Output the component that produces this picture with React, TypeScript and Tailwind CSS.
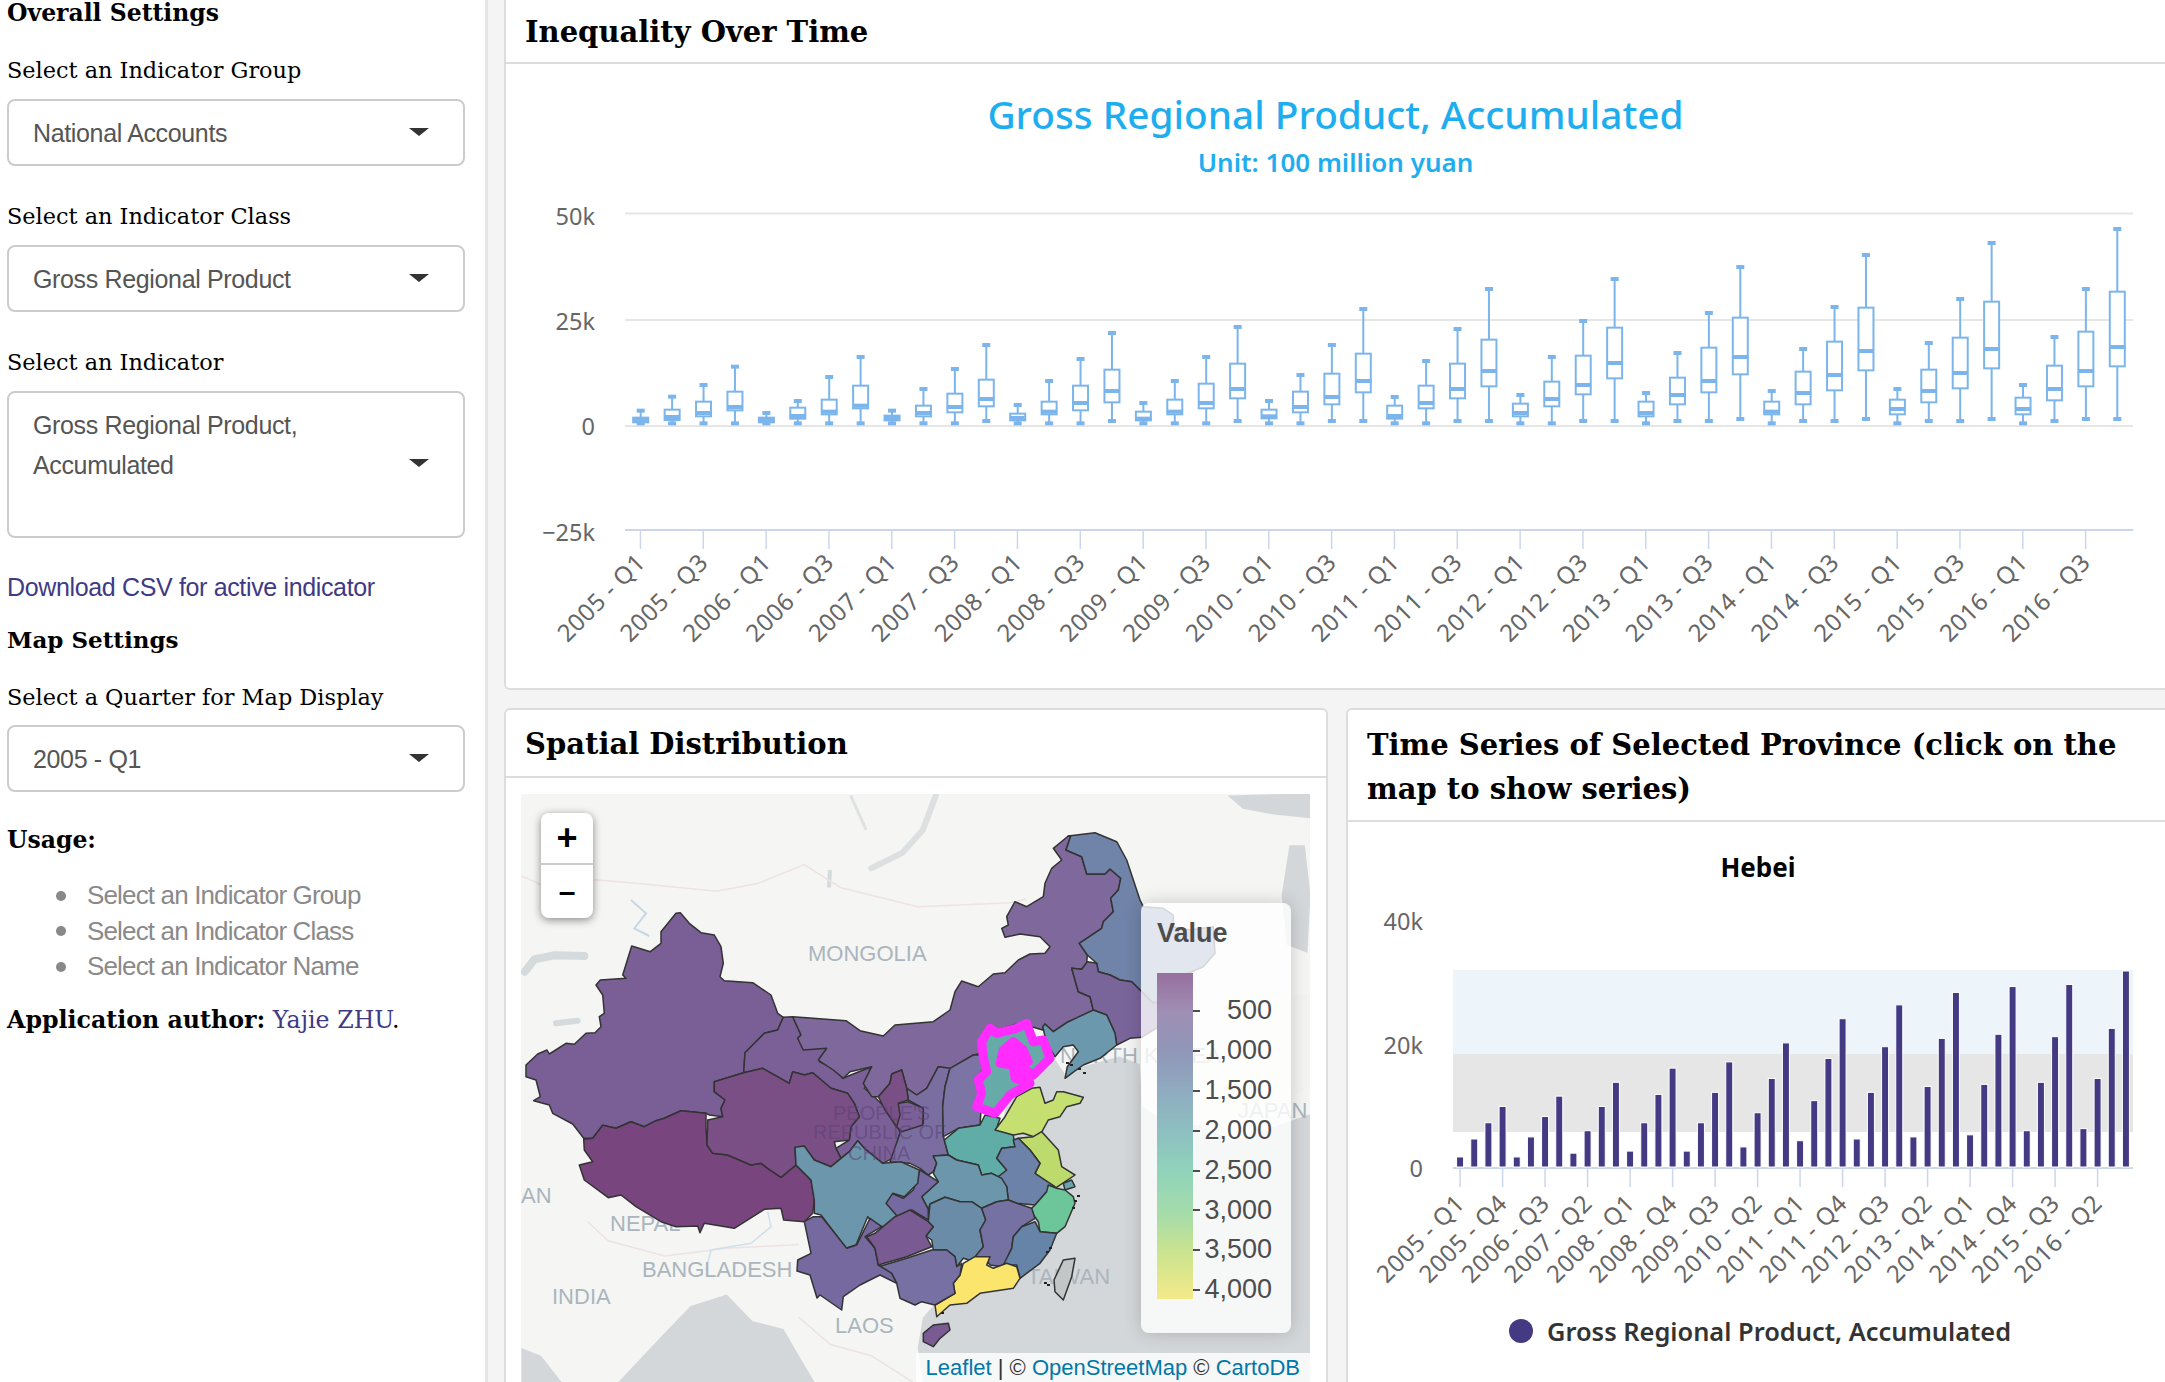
import React from "react";

const serif = "font-['DejaVu_Serif',serif]";
const sans = "font-['Liberation_Sans',sans-serif]";
const chartFont = "'Noto Sans', sans-serif";

// [high, boxTop, median, boxBottom, low], measured on the crop (y = 180 + v / 3)
const boxData = [
  [692, 713, 720, 727, 730], [650, 689, 711, 720, 730], [615, 665, 699, 709, 730], [560, 635, 681, 691, 730],
  [699, 713, 720, 727, 730], [663, 683, 708, 716, 730], [591, 659, 695, 703, 730], [531, 617, 677, 685, 730],
  [692, 707, 714, 721, 730], [627, 677, 699, 709, 730], [567, 641, 681, 697, 730], [495, 599, 657, 679, 723],
  [675, 701, 714, 721, 730], [603, 665, 695, 703, 730], [537, 617, 669, 691, 730], [459, 569, 633, 667, 723],
  [669, 695, 716, 721, 730], [603, 659, 695, 703, 730], [531, 611, 669, 685, 730], [441, 551, 627, 655, 723],
  [663, 689, 709, 715, 730], [585, 635, 681, 697, 730], [495, 581, 651, 673, 723], [387, 521, 603, 637, 723],
  [651, 677, 708, 716, 730], [543, 617, 669, 685, 730], [447, 551, 627, 655, 723], [327, 479, 573, 619, 723],
  [645, 671, 699, 709, 730], [531, 605, 657, 679, 730], [423, 527, 615, 643, 723], [297, 443, 549, 595, 723],
  [639, 665, 699, 709, 730], [519, 593, 645, 673, 723], [399, 503, 603, 637, 723], [261, 413, 531, 583, 717],
  [633, 665, 695, 703, 730], [507, 575, 639, 673, 723], [381, 485, 585, 631, 723], [225, 383, 513, 571, 717],
  [627, 659, 687, 703, 730], [489, 569, 633, 667, 723], [357, 473, 579, 625, 723], [189, 365, 507, 565, 717],
  [615, 653, 687, 703, 730], [471, 557, 627, 661, 723], [327, 455, 573, 619, 717], [147, 335, 501, 559, 717],
];

const barData = [
  917, 865, 818, 771, 917, 859, 800, 741, 906, 841, 771, 701, 900, 818, 736, 660, 900, 818, 730, 642, 888, 789, 690, 587,
  870, 754, 632, 517, 865, 730, 598, 477, 859, 713, 574, 441, 853, 707, 562, 424, 841, 701, 569, 418, 835, 690, 545, 379,
];

const topLabels: string[] = [];
for (let y = 2005; y <= 2016; y++) {
  topLabels.push(`${y} - Q1`, `${y} - Q3`);
}

const sideLabels = [
  "2005 - Q1", "2005 - Q4", "2006 - Q3", "2007 - Q2", "2008 - Q1", "2008 - Q4", "2009 - Q3", "2010 - Q2",
  "2011 - Q1", "2011 - Q4", "2012 - Q3", "2013 - Q2", "2014 - Q1", "2014 - Q4", "2015 - Q3", "2016 - Q2",
];

// map outlines were traced on crops, each crop has its own origin and scale
const crops: Record<string, [number, number, number, number]> = {
  a: [521, 900, 1 / 3, 1 / 3],
  b: [800, 1000, 1 / 3, 1 / 3],
  c: [950, 800, 1 / 3, 1 / 3],
  d: [510, 780, 1 / 1.9375, 1 / 2.605],
};

const pts = (segs: [string, string][]) =>
  segs
    .map(([k, s]) => {
      const [ox, oy, sx, sy] = crops[k];
      return s
        .trim()
        .split(/\s+/)
        .map((p) => {
          const [x, y] = p.split(",").map(Number);
          return `${(ox + x * sx).toFixed(1)},${(oy + y * sy).toFixed(1)}`;
        })
        .join(" ");
    })
    .join(" ");

const provinces: { c: string; d: [string, string][] }[] = [
  { c: "#7a5e96", d: [["a", "478,38 505,70 540,98 580,105 600,140 607,190 597,230 610,242 695,248 750,285 770,340 787,352 770,390 730,400 695,435 672,458 668,518 580,545 580,575 612,600 600,625 605,650 565,645 555,640 480,632 430,655 405,662 370,680 330,665 285,685 245,676 215,715 188,715 155,672 95,640 85,615 38,602 58,590 45,540 15,530 15,495 50,462 78,450 85,462 135,430 160,433 195,400 222,398 240,380 235,350 250,340 245,285 225,255 238,240 315,235 305,225 332,138 388,155 420,130 420,95 465,40"]] },
  { c: "#78457f", d: [["a", "555,640 480,632 430,655 405,662 370,680 330,665 285,685 245,676 215,715 188,718 190,750 215,785 175,795 190,840 262,893 300,885 345,920 420,965 465,980 530,978 537,998 550,970 640,985 730,928 780,925 788,960 850,965 875,940 880,900 870,840 825,795 780,832 740,805 720,790 690,795 620,765 575,760 558,735 555,680"]] },
  { c: "#7b5f97", d: [["a", "787,352 815,350 840,405 830,415 855,448 905,435 918,450 895,485 945,510 965,535 1040,505 1055,510 1050,535 1030,565 1060,590 1090,620 1110,650 1125,680 1140,690 1130,720 1125,770 1085,790 1030,745 1010,722 985,755 960,775 945,745 985,720 990,680 1015,650 1000,610 980,580 930,565 875,518 850,525 815,515 805,550 725,505 668,518 672,458 695,435 730,400 770,390"]] },
  { c: "#7a4f85", d: [["a", "580,545 668,518 725,505 805,550 815,515 850,525 875,518 930,565 980,580 1000,610 1015,650 990,680 985,720 940,725 945,745 960,775 930,800 880,780 850,740 822,745 825,795 780,832 740,805 720,790 690,795 620,765 575,760 558,735 560,660 605,650 600,625 612,600 580,575"]] },
  { c: "#7e689c", d: [["a", "815,350"], ["b", "138,62 180,92 250,108 285,75 400,65 450,30"], ["c", "15,575 35,543 85,560 130,522 165,518 205,480 240,462 285,460 300,440 270,410 210,402 165,412 155,385 175,375 170,350 195,305 230,320 280,290 285,250 305,205 335,180 310,145 355,108 362,108 348,150 395,170 410,222 465,222 480,207 512,235 505,270 482,295 490,335 460,365 455,385 388,430 412,465 410,490 395,508 365,505 385,575 420,590 430,630 400,650 355,665 310,695 285,672 278,690"], ["b", "660,70 590,90 570,85 545,125 545,160 520,165 455,208 415,200 380,265 350,285 320,265 305,210 275,222 270,250 235,290 215,290 190,250 215,200 150,215 130,235 100,210 55,180 80,145 10,150 0,130"], ["a", "830,415 840,405"]] },
  { c: "#7083a8", d: [["c", "355,108 435,98 500,125 530,180 555,255 570,300 580,320 640,325 670,345 670,380 720,390 790,380 795,460 760,500 690,530 660,590 610,610 575,575 545,545 510,540 480,525 445,515 440,490 412,465 388,430 455,385 460,365 490,335 482,295 505,270 512,235 480,207 465,222 410,222 395,170 348,150 362,108"]] },
  { c: "#7a659b", d: [["c", "365,505 395,508 412,485 440,490 445,515 480,525 510,540 545,545 575,575 610,610 660,590 690,620 660,660 610,690 575,712 540,715 500,735 495,700 470,645 430,630 420,590 385,575"]] },
  { c: "#6c98ad", d: [["c", "278,680 285,672 310,695 355,665 430,630 470,645 495,700 500,735 450,775 400,795 372,815 345,835 352,800 385,755 370,735 340,740 315,770 290,730"]] },
  { c: "#7a6ea1", d: [["b", "415,200 450,205 435,260 428,320 430,408 445,465 400,468 410,490 400,515 385,525 360,505 330,490 270,485 300,400 295,380 300,345 325,380 370,370 370,325 325,300 320,265 350,285 380,265"]] },
  { c: "#7b5f97", d: [["b", "295,310 325,305 370,325 368,375 305,395 290,380"]] },
  { c: "#7a4f85", d: [["b", "305,210 275,222 270,250 235,290 255,330 290,380 300,345 295,310 325,300 320,265"]] },
  { c: "#7b74a4", d: [["b", "450,205 520,165 540,165 555,200 525,240 545,300 540,375 475,385 430,410 428,320 435,260"]] },
  { c: "#60ada8", d: [["b", "433,420 475,385 540,375 555,345 600,355 590,385 640,405 645,440 605,445 590,475 620,510 605,535 575,520 545,525 535,495 470,480 445,465"]] },
  { c: "#c5e070", d: [["b", "585,390 615,350 650,290 695,265 720,262 735,310 760,300 770,275 790,275 850,292 840,310 800,320 780,350 745,360 715,415 670,400 640,405"]] },
  { c: "#bcdb6c", d: [["b", "655,415 700,410 725,395 775,450 785,500 825,525 765,565 705,520 720,490 690,450"]] },
  { c: "#6d82a8", d: [["b", "640,420 655,415 690,450 720,490 705,520 765,560 740,575 705,615 650,610 625,600 620,560 595,530 620,510 590,475 605,445 645,440"]] },
  { c: "#6da3ae", d: [["b", "790,550 815,540 825,560 795,570"]] },
  { c: "#6cc69a", d: [["b", "745,555 770,565 795,570 820,590 825,610 795,680 770,700 720,695 715,665 690,630 705,615 740,575"]] },
  { c: "#6c96ac", d: [["b", "400,520 410,490 400,468 445,465 470,480 535,495 545,525 575,520 605,535 620,560 625,600 590,605 545,625 515,605 480,605 435,592 390,612 385,628 365,590 415,545"]] },
  { c: "#7469a0", d: [["b", "360,510 415,545 365,590 385,628 385,660 335,630 300,650 285,655 260,625 255,610 275,580 310,595 340,570"]] },
  { c: "#6c96ac", d: [["a", "822,742 850,738 880,780 930,800 985,755 1010,722 1030,745 1085,790 1140,785 1195,810 1190,850 1150,890 1115,880 1095,910 1130,950 1110,985 1060,975 1040,950 1005,1035 975,1045 900,945 880,940 880,900 870,840 825,795"]] },
  { c: "#6a8ca9", d: [["b", "390,612 435,592 480,605 515,605 545,625 557,660 540,690 550,740 525,785 490,775 470,800 465,770 440,750 400,750 395,720 378,708 400,680 385,665"]] },
  { c: "#7572a3", d: [["b", "545,625 590,605 625,600 650,610 695,625 705,655 665,680 640,710 635,745 610,800 570,795 555,775 525,770 550,740 540,690 557,660"]] },
  { c: "#6584a8", d: [["b", "705,665 720,695 770,700 750,750 720,790 660,835 650,795 610,795 635,745 640,710 665,680"]] },
  { c: "#fbe56c", d: [["b", "490,790 525,770 570,770 560,795 580,805 620,790 650,800 660,835 640,865 570,875 540,880 500,910 450,915 410,950 405,915 465,880 460,850 480,825"]] },
  { c: "#7670a3", d: [["b", "235,800 320,775 395,750 440,750 465,770 470,800 485,790 480,825 460,850 465,880 405,915 365,905 345,915 300,895 290,850 275,820"]] },
  { c: "#7669a0", d: [["b", "13,665 40,650 65,650 140,745 170,735 210,655 245,680 195,710 225,745 235,795 275,820 290,850 240,825 180,855 130,890 125,930 60,885 51,894 30,825 -9,813 -7,780 33,760"]] },
  { c: "#7a5a92", d: [["b", "200,710 225,700 285,650 330,630 385,665 400,680 378,708 395,740 320,770 235,795 225,745"]] },
  { c: "#7a5a92", d: [["b", "370,1000 400,975 445,970 450,990 420,1015 400,1040 370,1025"]] },
  { c: "#c3c6c6", d: [["b", "790,780 825,775 815,830 790,900 765,875 762,840"]] },
];

const mapLabels: [string, number, number, number][] = [
  ["MONGOLIA", 808, 961, 22],
  ["NEPAL", 610, 1231, 22],
  ["BANGLADESH", 642, 1277, 22],
  ["INDIA", 552, 1304, 22],
  ["LAOS", 835, 1333, 22],
  ["AN", 521, 1203, 22],
  ["TAIWAN", 1027, 1284, 22],
  ["NORTH KOREA", 1060, 1063, 22],
  ["JAPAN", 1238, 1118, 22],
];

const Caret = ({ mt }: { mt: string }) => (
  <div className={`h-0 w-0 border-x-[10px] border-t-[8px] border-x-transparent border-t-[#333] ${mt}`} />
);

const Select = ({ lines, tall, className }: { lines: string[]; tall?: boolean; className?: string }) => (
  <div
    className={`flex justify-between rounded-lg border-2 border-[#ccc] pl-[24px] pr-[34px] pt-[12px] text-[#555] ${sans} text-[25px] leading-[40px] tracking-[-0.35px] ${
      tall ? "h-[147px]" : "h-[67px]"
    } ${className ?? ""}`}
  >
    <div>
      {lines.map((l) => (
        <div key={l}>{l}</div>
      ))}
    </div>
    <Caret mt={tall ? "mt-[54px]" : "mt-[15px]"} />
  </div>
);

const Label = ({ children, className }: { children: React.ReactNode; className?: string }) => (
  <div className={`h-[32px] text-[22.4px] leading-[32px] text-black ${className ?? ""}`}>{children}</div>
);

const Bullet = ({ children }: { children: React.ReactNode }) => (
  <li className="flex items-center">
    <span className="mr-[21px] h-[10px] w-[10px] rounded-full bg-[#888]" />
    {children}
  </li>
);

const Sidebar = () => (
  <aside className={`h-full w-[488px] shrink-0 border-r-[3px] border-[#e6e6e6] bg-white pl-[7px] pr-[20px] ${serif}`}>
    <div className="h-[27px] text-[23.5px] font-bold leading-[27px] text-black">Overall Settings</div>
    <Label className="mt-[27px]">Select an Indicator Group</Label>
    <Select lines={["National Accounts"]} className="mt-[13px]" />
    <Label className="mt-[34px]">Select an Indicator Class</Label>
    <Select lines={["Gross Regional Product"]} className="mt-[13px]" />
    <Label className="mt-[34px]">Select an Indicator</Label>
    <Select lines={["Gross Regional Product,", "Accumulated"]} tall className="mt-[13px]" />
    <div className={`mt-[33px] h-[32px] text-[25px] leading-[32px] tracking-[-0.35px] text-[#3f3a85] ${sans}`}>
      Download CSV for active indicator
    </div>
    <div className="mt-[21px] h-[32px] text-[23px] font-bold leading-[32px] text-black">Map Settings</div>
    <Label className="mt-[25px]">Select a Quarter for Map Display</Label>
    <Select lines={["2005 - Q1"]} className="mt-[12px]" />
    <div className="mt-[32px] h-[32px] text-[23.5px] font-bold leading-[32px] text-black">Usage:</div>
    <ul className={`mt-[22px] pl-[49px] text-[26px] leading-[35.5px] tracking-[-0.85px] text-[#8a8a8a] ${sans}`}>
      <Bullet>Select an Indicator Group</Bullet>
      <Bullet>Select an Indicator Class</Bullet>
      <Bullet>Select an Indicator Name</Bullet>
    </ul>
    <div className="mt-[19px] h-[32px] text-[23.7px] leading-[32px] text-black">
      <span className="font-bold">Application author:</span> <span className="text-[#3f3a85]">Yajie ZHU</span>.
    </div>
  </aside>
);

const Header = ({ children, className }: { children: React.ReactNode; className?: string }) => (
  <div className={`border-b-2 border-[#ddd] px-[19px] text-[29px] font-bold leading-[44px] text-black ${serif} ${className ?? ""}`}>
    {children}
  </div>
);

const BoxPlot = () => {
  const step = (2133 - 625) / 48;
  const yOf = (v: number) => 180 + v / 3;
  return (
    <svg viewBox="506 190 1659 498" className="block h-[498px] w-[1659px]" style={{ fontFamily: chartFont }}>
      {[213.5, 320, 426].map((y) => (
        <rect key={y} x={625} y={y - 1} width={1508} height={2} fill="#e6e6e6" />
      ))}
      <rect x={625} y={529} width={1508} height={2} fill="#ccd6eb" />
      {[["50k", 225], ["25k", 330], ["0", 435], ["−25k", 541]].map(([t, y]) => (
        <text key={t} x={595} y={y} textAnchor="end" fontSize={23.5} fill="#666">
          {t}
        </text>
      ))}
      {boxData.map((d, i) => {
        const x = 625 + step * (i + 0.5);
        const [hi, top, med, bot, lo] = d.map(yOf);
        return (
          <g key={i} fill="#7cb5ec">
            <rect x={x - 1} y={hi} width={2} height={lo - hi} />
            <rect x={x - 4} y={hi - 2} width={8} height={4} />
            <rect x={x - 4} y={lo - 2} width={8} height={4} />
            <rect x={x - 7.5} y={top} width={15} height={bot - top} fill="#fff" stroke="#7cb5ec" strokeWidth={2} />
            <rect x={x - 8} y={med - 2} width={16} height={4} />
          </g>
        );
      })}
      {topLabels.map((t, i) => {
        const x = 625 + step * (i * 2 + 0.5);
        return (
          <g key={t}>
            <rect x={x - 1} y={530} width={1.5} height={19} fill="#ccd6eb" />
            <text x={x + 6} y={564} textAnchor="end" fontSize={24} letterSpacing={0.5} fill="#666" transform={`rotate(-45 ${x + 6} 564)`}>
              {t}
            </text>
          </g>
        );
      })}
    </svg>
  );
};

const SpatialMap = () => (
  <div className="relative ml-[15px] mt-[16px] h-[588px] w-[789px] overflow-hidden bg-[#f5f5f3]">
    <svg viewBox="521 794 789 588" className="block h-[588px] w-[789px]" style={{ fontFamily: "'Liberation Sans', sans-serif" }}>
      <polygon points={pts([["d", "1060,770 1100,750 1180,720 1220,740 1225,850 1280,900 1340,900 1400,940 1551,870 1551,1568 800,1568 790,1480 800,1400 820,1370 1000,1200 1060,1000"]])} fill="#d4d7d9" />
      <polygon points={pts([["b", "640,230 760,170 800,230 860,200 900,260 900,700 700,800 600,400"]])} fill="#d4d7d9" />
      <polygon points={pts([["c", "330,765 345,738 380,738 388,760 358,800 345,830 340,800"]])} fill="#f5f5f3" />
      <polygon points={pts([["d", "210,1568 300,1440 350,1370 420,1340 470,1410 530,1430 560,1500 590,1568"]])} fill="#d4d7d9" />
      <polygon points={pts([["d", "22,1480 60,1500 100,1568 22,1568"]])} fill="#d4d7d9" />
      <polygon points={pts([["d", "1240,720 1290,690 1340,740 1400,700 1500,560 1551,560 1551,800 1440,870 1350,880 1300,800"]])} fill="#f3f3f1" />
      <polygon points={pts([["d", "1390,40 1551,35 1551,100 1480,90 1420,75"]])} fill="#d4d7d9" />
      <polygon points={pts([["d", "1510,170 1540,170 1551,300 1545,450 1505,430 1495,300"]])} fill="#d4d7d9" />
      <polyline points={pts([["a", "12,215 40,178 100,166 190,168"]])} fill="none" stroke="#d5dadc" strokeWidth={8} strokeLinecap="round" />
      <polyline points={pts([["a", "105,370 170,362"]])} fill="none" stroke="#d5dadc" strokeWidth={6} strokeLinecap="round" />
      <polyline points={pts([["d", "825,40 800,130 760,190 700,230"]])} fill="none" stroke="#dde0e1" strokeWidth={6} strokeLinecap="round" />
      <polyline points={pts([["d", "660,40 690,130"]])} fill="none" stroke="#dfe2e3" strokeWidth={3} />
      <polyline points={pts([["d", "620,235 618,280"]])} fill="none" stroke="#d5dadc" strokeWidth={4} />
      <polyline points={pts([["d", "22,250 90,290 165,260 250,270 400,290 480,270 570,220 640,280 790,330 970,320 1000,310"]])} fill="none" stroke="#eee2e3" strokeWidth={1.5} />
      <polyline points={pts([["d", "150,1150 190,1200 300,1240 420,1220 560,1210"]])} fill="none" stroke="#eee2e3" strokeWidth={1.5} />
      <polyline points={pts([["d", "560,1400 620,1470 700,1500 780,1568"]])} fill="none" stroke="#eee2e3" strokeWidth={1.5} />
      <polyline points={pts([["a", "330,0 375,40 340,85 385,108"]])} fill="none" stroke="#c6d8e4" strokeWidth={2} />
      <polyline points={pts([["a", "740,935 750,980 690,1030 570,1050 555,1110"]])} fill="none" stroke="#cfe0ec" strokeWidth={1.5} />
      {mapLabels.map(([t, x, y, s]) => (
        <text key={t} x={x} y={y} fontSize={s} fill="#aab5bd">
          {t}
        </text>
      ))}
      {provinces.map((p, i) => (
        <polygon key={i} points={pts(p.d)} fill={p.c} stroke="#333" strokeWidth={1.5} strokeLinejoin="round" />
      ))}
      <polygon
        points={pts([["b", "570,85 590,100 650,85 680,70 700,125 730,120 750,175 700,225 670,205 690,250 630,285 585,340 530,320 545,280 535,240 560,215 550,170 545,125"]])}
        fill="#67aba8"
        stroke="#ff2bff"
        strokeWidth={9}
        strokeLinejoin="round"
      />
      <polygon
        points={pts([["b", "640,125 670,150 685,185 660,200 660,240 645,235 640,195 600,190 610,150"]])}
        fill="#ff2bff"
        stroke="#ff2bff"
        strokeWidth={9}
        strokeLinejoin="round"
      />
      <g fontSize={20} fill="#5b3f76" fillOpacity={0.55}>
        <text x={833} y={1120}>PEOPLE'S</text>
        <text x={813} y={1139}>REPUBLIC OF</text>
        <text x={848} y={1160}>CHINA</text>
      </g>
      <g fill="#222">
        {[[1077, 1195], [1074, 1200], [1072, 1207], [1049, 1247], [1046, 1251], [1044, 1282], [1047, 1284], [941, 1312], [1066, 1062], [1070, 1064], [1078, 1068], [1083, 1072]].map(([x, y], i) => (
          <rect key={i} x={x} y={y} width={3} height={2} />
        ))}
      </g>
    </svg>

    <div className="absolute left-[20px] top-[19px] flex h-[105px] w-[52px] flex-col overflow-hidden rounded-lg bg-white text-black shadow-[0_2px_8px_rgba(0,0,0,0.45)]">
      <div className={`flex h-[52px] items-center justify-center border-b-2 border-[#ccc] text-[36px] font-bold ${sans}`}>+</div>
      <div className={`flex flex-1 items-center justify-center text-[30px] font-bold ${sans}`}>–</div>
    </div>

    <div className="absolute left-[620px] top-[109px] h-[430px] w-[150px] rounded-lg bg-white/80 pl-[16px] pt-[12px] shadow-[0_0_18px_rgba(0,0,0,0.18)]">
      <div className={`text-[27px] font-bold leading-[36px] text-[#4d4d4d] ${sans}`}>Value</div>
      <div className="mt-[22px] flex h-[326px]">
        <div className="h-full w-[36px] bg-[linear-gradient(#976f9e,#9f8fb5_12%,#9097b8_24%,#90abc0_36%,#8dc0c0_49%,#90d3ba_61%,#a5dcaa_74%,#cce48e_86%,#f3e98a)]" />
        <div className={`flex-1 pt-[18px] text-right text-[27px] leading-[39.9px] text-[#4d4d4d] ${sans}`}>
          {["500", "1,000", "1,500", "2,000", "2,500", "3,000", "3,500", "4,000"].map((v) => (
            <div key={v} className="flex items-center justify-between pr-[19px]">
              <span className="h-[2px] w-[7px] bg-[#4d4d4d]" />
              <span>{v}</span>
            </div>
          ))}
        </div>
      </div>
    </div>

    <div className={`absolute bottom-0 right-0 flex h-[29px] items-center bg-white/80 px-[10px] text-[22px] text-[#333] ${sans}`}>
      <span className="text-[#0078a8]">Leaflet</span>
      <span className="whitespace-pre"> | © </span>
      <span className="text-[#0078a8]">OpenStreetMap</span>
      <span className="whitespace-pre"> © </span>
      <span className="text-[#0078a8]">CartoDB</span>
    </div>
  </div>
);

const BarChart = () => {
  const step = 680 / 48;
  return (
    <svg viewBox="1348 822 817 560" className="block h-[560px] w-[817px]" style={{ fontFamily: chartFont }}>
      <text x={1758} y={877} textAnchor="middle" fontSize={26} fontWeight={700} fill="#000">
        Hebei
      </text>
      <rect x={1453} y={970} width={680} height={84} fill="#edf5fb" />
      <rect x={1453} y={1054} width={680} height={78} fill="#e6e6e6" />
      <rect x={1453} y={1167} width={680} height={2} fill="#ccd6eb" />
      {[["40k", 930], ["20k", 1054], ["0", 1177]].map(([t, y]) => (
        <text key={t} x={1423} y={y} textAnchor="end" fontSize={23.5} fill="#666">
          {t}
        </text>
      ))}
      {barData.map((v, i) => {
        const top = 840 + v / 2.893;
        return (
          <rect
            key={i}
            x={1453 + step * (i + 0.5) - 3.5}
            y={top}
            width={7}
            height={1167 - top}
            fill="#443a83"
            stroke="#fff"
            strokeWidth={1}
          />
        );
      })}
      {sideLabels.map((t, i) => {
        const x = 1453 + step * (i * 3 + 0.5);
        return (
          <g key={t}>
            <rect x={x - 0.75} y={1168} width={1.5} height={19} fill="#ccd6eb" />
            <text x={x + 6} y={1205} textAnchor="end" fontSize={24} letterSpacing={0.5} fill="#666" transform={`rotate(-45 ${x + 6} 1205)`}>
              {t}
            </text>
          </g>
        );
      })}
      <circle cx={1521} cy={1331} r={12} fill="#443a83" />
      <text x={1547} y={1341} fontSize={25.4} fontWeight={600} fill="#333">
        Gross Regional Product, Accumulated
      </text>
    </svg>
  );
};

export default function App() {
  return (
    <div className="flex h-[1382px] w-[2165px] overflow-hidden bg-[#f4f4f4]">
      <Sidebar />
      <main className="flex min-w-0 flex-1 flex-col gap-[18px] pl-[16px]">
        <section className="h-[690px] shrink-0 rounded-bl-md border-b-2 border-l-2 border-[#ddd] bg-white">
          <Header className="flex h-[64px] items-center pt-[2px]">Inequality Over Time</Header>
          <div className="mt-[25px] text-center text-[38.8px] font-medium leading-[50px] text-[#1eaeef]" style={{ fontFamily: chartFont }}>
            Gross Regional Product, Accumulated
          </div>
          <div className="mt-[8px] text-center text-[26px] font-semibold leading-[30px] text-[#1eaeef]" style={{ fontFamily: chartFont }}>
            Unit: 100 million yuan
          </div>
          <div className="mt-[13px]">
            <BoxPlot />
          </div>
        </section>
        <div className="flex min-h-0 flex-1 gap-[18px]">
          <section className="w-[824px] shrink-0 rounded-t-md border-l-2 border-r-2 border-t-2 border-[#ddd] bg-white">
            <Header className="flex h-[68px] items-center pt-[2px]">Spatial Distribution</Header>
            <SpatialMap />
          </section>
          <section className="min-w-0 flex-1 rounded-tl-md border-l-2 border-t-2 border-[#ddd] bg-white">
            <Header className="h-[112px] pt-[13px]">
              Time Series of Selected Province (click on the map to show series)
            </Header>
            <BarChart />
          </section>
        </div>
      </main>
    </div>
  );
}
